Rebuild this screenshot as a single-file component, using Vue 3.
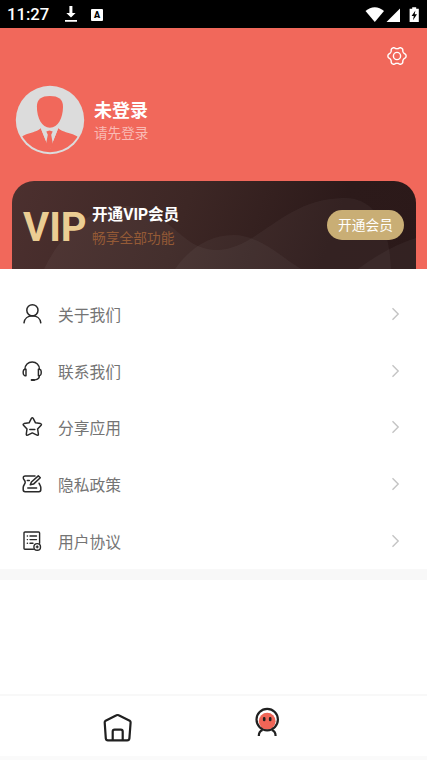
<script setup>
const menu = [
  { icon: 'user', label: '关于我们' },
  { icon: 'headset', label: '联系我们' },
  { icon: 'star', label: '分享应用' },
  { icon: 'policy', label: '隐私政策' },
  { icon: 'agreement', label: '用户协议' },
]

// Outline of the settings gear: six rounded lobes around (10, 10)
const gear = Array.from({ length: 73 }, (_, i) => {
  const a = (i * 5 * Math.PI) / 180
  const r = 8.2 + 0.95 * Math.tanh(1.6 * Math.cos(6 * a))
  return `${(10 + r * Math.cos(a)).toFixed(2)},${(10 + r * Math.sin(a)).toFixed(2)}`
}).join(' ')
</script>

<template>
  <div class="screen">
    <div class="status">
      <span class="time">11:27</span>
      <svg class="download" width="14" height="18" viewBox="0 0 14 18">
        <path d="M5.400 1h3v7h3.200L7 12.600 2.300 8h3.100zM1 15.100h12v1.600H1z" fill="#fff" />
      </svg>
      <span class="badge">A</span>
      <svg class="signals" width="56" height="18" viewBox="0 0 56 18">
        <path d="M.5 5.100C6-.2 13.500-.2 19 5.100L9.800 16z" fill="#fff" />
        <path d="M35 2.500V16H21.500z" fill="#fff" />
        <path d="M47.200 1.200h4v1.500h2.600V16H44.600V2.700h2.600z" fill="#fff" />
        <path d="M50.400 4.500 46.600 10h2.200l-.8 4.200 4-5.900h-2.300z" fill="#000" />
      </svg>
    </div>

    <header class="hero">
      <svg class="gear" width="20" height="20" viewBox="0 0 20 20" fill="none" stroke="#fff" stroke-width="1.400" stroke-linejoin="round">
        <polygon :points="gear" />
        <circle cx="10" cy="10" r="3.600" />
      </svg>
      <div class="profile">
        <svg width="70" height="70" viewBox="0 0 70 70">
          <defs>
            <clipPath id="bust"><circle cx="35" cy="35" r="32.300" /></clipPath>
          </defs>
          <circle cx="35" cy="35" r="34.200" fill="#dcdcdc" />
          <path d="M21.900 21.500c0-7.500 4.500-10.600 13-10.600S48 14 48 21.500c0 11.500-5 21.300-13.100 21.300S21.900 33 21.900 21.500z" fill="#f1685b" />
          <g clip-path="url(#bust)">
            <path d="M25.800 43.200 34.700 65l8.500-21.800c7 6 19.600 4 23.800 13.800v13H3V57c3.200-9.800 16-7.800 22.800-13.800z" fill="#f1685b" />
            <path d="m25.800 43.200 8.700 22 8.700-22-4.200 4.200-2.500-2.400h-4l-2.400 2.400z" fill="#dcdcdc" />
            <path d="m31.300 46.500 3.200-1 3.200 1-1.500 3.300 1.700 9.200-3.400 7.500L31 59l1.800-9.200z" fill="#f1685b" />
          </g>
        </svg>
        <div class="who">
          <div class="name">未登录</div>
          <div class="hint">请先登录</div>
        </div>
      </div>

      <section class="vip">
        <svg class="waves" width="404" height="88" viewBox="0 0 404 88" fill="#fff">
          <path d="M32 88C52 47 83 25 115 25c40 0 53 44 89 44 42 0 66-51 127-52 28-1 46 21 48 71z" fill-opacity=".04" />
          <path d="M163 88c14-20 34-34 58-34 27 0 48 22 68 34z" fill-opacity=".04" />
          <path d="M346 88q31-23 58-31v31z" fill-opacity=".04" />
        </svg>
        <div class="mark">VIP</div>
        <div class="offer">
          <div class="offer-title">开通VIP会员</div>
          <div class="offer-sub">畅享全部功能</div>
        </div>
        <button class="join">开通会员</button>
      </section>
    </header>

    <ul class="menu">
      <li v-for="item in menu" :key="item.icon">
        <svg class="icon" width="22" height="22" viewBox="0 0 22 22" fill="none" stroke="#292929" stroke-width="1.500" stroke-linecap="round" stroke-linejoin="round">
          <g v-if="item.icon === 'user'">
            <circle cx="11.400" cy="7.300" r="5.600" />
            <path d="M3 19.800c.5-4.200 3.800-7 8.400-7s7.900 2.800 8.400 7" />
          </g>
          <g v-else-if="item.icon === 'headset'" stroke-width="1.450">
            <path d="M4 9C4 5 7 2 11.200 2s7.200 3 7.200 7" />
            <path d="M5 9.200H3.900q-1.700.5-1.700 2.400v1.700q0 2 1.700 2.400H5zM17.400 9.200h1.100q1.700.5 1.700 2.400v1.700q0 2-1.700 2.400h-1.100z" />
            <path d="M18.400 15.600c0 2.700-1.900 4.100-4.400 4.300" />
            <path d="M10.600 20h2.600" stroke-width="2" />
          </g>
          <g v-else-if="item.icon === 'star'">
            <path d="M10.400 2.400q.9-1.300 1.800 0l2.300 4.400 5 .8q1.500.4.600 1.700L16.600 13l.8 5q.1 1.600-1.400 1.100l-4.700-2.200-4.600 2.200q-1.500.5-1.400-1.100L6 13 2.500 9.300q-.9-1.300.6-1.700l5-.8z" />
            <path d="M8.800 13.500h5" />
          </g>
          <g v-else-if="item.icon === 'policy'">
            <path d="M14 3.100H4.200Q2.200 3.100 2.300 5c.1 2 1.900 2.200 1.900 4.300 0 2-2 2.500-2 5.300v2.200q0 1.900 1.900 1.900h13.800q1.900 0 1.900-1.900v-2.200c0-2-1.300-2.800-1.700-4.300" />
            <path d="m17.300 2.900 2 1.900-6.800 6.300-3.200.7 1.100-2.800zM6.300 7.500h2M6.800 14.900h8.800" />
          </g>
          <g v-else stroke-width="1.400">
            <path d="M12.400 19.200H4q-1 0-1-1V3q0-1 1-1h13.600q1 0 1 1v10.200" />
            <path d="M6.300 6h.2M9 6h6.500M6.300 9.600h.2M9 9.600h6.500M6.300 13.300h.2M9 13.300h3" />
            <circle cx="16.200" cy="16.900" r="3.300" /><path d="M15.300 16.900h1.800M16.200 16v1.800" />
          </g>
        </svg>
        <span class="label">{{ item.label }}</span>
        <svg class="chevron" width="10" height="14" viewBox="0 0 10 14" fill="none" stroke="#c4c4c4" stroke-width="1.400"><path d="m1.500 1.300 5.700 5.700-5.700 5.700" /></svg>
      </li>
    </ul>
    <div class="divider"></div>
    <div class="space"></div>

    <nav class="tabs">
      <div class="tab home">
        <svg width="30" height="30" viewBox="0 0 30 30" fill="none" stroke="#202020" stroke-width="2.200" stroke-linejoin="round">
          <path d="M13.500 2.300q1.100-.6 2.200 0l11 5.400q1 .6.900 1.800l-1.200 15.800q-.2 2-2.200 2H5q-2 0-2.200-2L1.700 9.500q-.1-1.200.9-1.800z" />
          <path d="M9.700 27v-8.400q0-1.900 1.900-1.900h6.200q1.900 0 1.900 1.900V27" />
        </svg>
      </div>
      <div class="tab me">
        <svg width="30" height="30" viewBox="0 0 30 30" fill="none" stroke="#202020" stroke-width="2.200">
          <circle cx="15.200" cy="14.200" r="8.400" fill="#ef6557" stroke="none" />
          <circle cx="15.200" cy="12.600" r="10.700" />
          <path d="M6.800 28.900c0-3 1.200-5 3.800-5.900M23.600 28.900c0-3-1.200-5-3.800-5.900" />
          <path d="M12.200 11.300v1.600M18.200 11.300v1.600" stroke-linecap="round" stroke-width="2.600" />
        </svg>
      </div>
    </nav>
    <div class="bottom"></div>
  </div>
</template>

<style>
body {
  margin: 0;
}
</style>

<style scoped>
.screen {
  width: 427px;
  height: 760px;
  overflow: hidden;
  display: flex;
  flex-direction: column;
  background: #fff;
  font-family: 'Noto Sans CJK SC', sans-serif;
}
.status {
  flex: none;
  height: 28px;
  box-sizing: border-box;
  padding: 1px 6px 0 7px;
  display: flex;
  align-items: center;
  background: #000;
  color: #fff;
}
.time {
  width: 57px;
  font: 500 16.700px/20px Roboto, sans-serif;
}
.download {
  margin-bottom: 1px;
}
.badge {
  margin-left: 13px;
  width: 12px;
  height: 12px;
  border-radius: 1px;
  background: #fff;
  color: #000;
  font: 900 9px/12px Roboto, sans-serif;
  text-align: center;
}
.signals {
  margin-left: auto;
}
.hero {
  flex: none;
  height: 241px;
  box-sizing: border-box;
  padding: 18px 11px 0 12px;
  display: flex;
  flex-direction: column;
  background: #f1685b;
}
.gear {
  align-self: flex-end;
  margin-right: 9.500px;
}
.profile {
  display: flex;
  margin: 19px 0 0 3px;
  height: 70px;
}
.who {
  padding: 12px 0 0 9px;
}
.name {
  color: #fff;
  font-size: 18px;
  line-height: 24px;
  font-weight: 700;
}
.hint {
  color: #f9bbb5;
  font-size: 13.600px;
  line-height: 22px;
}
.vip {
  position: relative;
  margin-top: 26px;
  height: 88px;
  box-sizing: border-box;
  display: flex;
  padding: 0 12px 0 11px;
  border-radius: 22px 22px 0 0;
  overflow: hidden;
  background: linear-gradient(110deg, #4c302f 0%, #3d2725 42%, #2c1a1a 78%, #2b1919 100%);
}
.waves {
  position: absolute;
  left: 0;
  top: 0;
}
.mark {
  position: relative;
  width: 69px;
  padding-top: 24px;
  color: #ebcd93;
  font: 700 40px/46px Roboto, sans-serif;
}
.offer {
  position: relative;
  padding-top: 22px;
}
.offer-title {
  color: #fff;
  font-family: Roboto, 'Noto Sans CJK SC', sans-serif;
  font-size: 15.600px;
  line-height: 24px;
  font-weight: 700;
  white-space: nowrap;
}
.offer-sub {
  color: #945a36;
  font-size: 13.750px;
  line-height: 21px;
}
.join {
  position: relative;
  margin: 29px 0 0 auto;
  width: 77px;
  height: 30px;
  padding: 0 0 1px;
  border: 0;
  border-radius: 15px;
  background: #c9ae75;
  color: #fff;
  font: 400 13.700px/29px 'Noto Sans CJK SC', sans-serif;
}
.menu {
  flex: none;
  list-style: none;
  margin: 0;
  padding: 17px 26px 0 21px;
}
.menu li {
  height: 56.600px;
  display: flex;
  align-items: center;
}
.label {
  margin-left: 15px;
  padding-top: 2px;
  font-size: 15.750px;
  line-height: 24px;
  color: #747474;
}
.chevron {
  margin-left: auto;
}
.divider {
  flex: none;
  height: 11px;
  background: #f8f8f8;
}
.space {
  flex: 1;
}
.tabs {
  flex: none;
  height: 60px;
  display: grid;
  grid-template-columns: 235px 64px;
  border-top: 2px solid #f8f8f8;
}
.tab {
  display: flex;
  justify-content: center;
}
.home {
  padding-top: 17px;
}
.me {
  padding-top: 11px;
}
.bottom {
  flex: none;
  height: 4px;
  background: #fafafa;
}
</style>
